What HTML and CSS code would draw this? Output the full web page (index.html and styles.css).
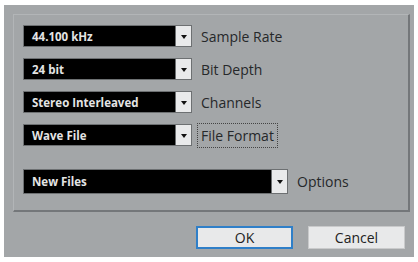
FILE: index.html
```html
<!DOCTYPE html>
<html>
<head>
    <link rel="stylesheet" href="styles.css">
</head>
<body>
    <div class="dialog">
        <div class="panel">
            <div class="row">
                <div class="combo">
                    <span class="combo-value">44.100 kHz</span>
                    <span class="combo-arrow"></span>
                </div>
                <span class="label">Sample Rate</span>
            </div>
            <div class="row">
                <div class="combo">
                    <span class="combo-value">24 bit</span>
                    <span class="combo-arrow"></span>
                </div>
                <span class="label">Bit Depth</span>
            </div>
            <div class="row">
                <div class="combo">
                    <span class="combo-value">Stereo Interleaved</span>
                    <span class="combo-arrow"></span>
                </div>
                <span class="label">Channels</span>
            </div>
            <div class="row">
                <div class="combo">
                    <span class="combo-value">Wave File</span>
                    <span class="combo-arrow"></span>
                </div>
                <span class="label focused">File Format</span>
            </div>
            <div class="row options-row">
                <div class="combo wide">
                    <span class="combo-value">New Files</span>
                    <span class="combo-arrow"></span>
                </div>
                <span class="label">Options</span>
            </div>
        </div>
        <div class="buttons">
            <button class="btn btn-default">OK</button>
            <button class="btn">Cancel</button>
        </div>
    </div>
</body>
</html>
```

FILE: styles.css
```css
body {
    margin: 0;
    background-color: #fff;
    font-family: "Open Sans", "Noto Sans", sans-serif;
}
.dialog {
    margin: 5px 4px 0 4px;
    width: 410px;
    height: 252px;
    box-sizing: border-box;
    background-color: #a3a6a8;
    padding: 9px 9px 0 9px;
}
.panel {
    width: 397px;
    height: 198px;
    box-sizing: border-box;
    border-top: 1px solid #b2b5b7;
    border-left: 1px solid #b2b5b7;
    border-right: 2px solid #74777a;
    border-bottom: 2px solid #74777a;
    margin-right: -4px;
    padding: 10px 0 0 9px;
    display: flex;
    flex-direction: column;
    gap: 11px;
}
.row {
    display: flex;
    align-items: center;
    gap: 9px;
    height: 22px;
}
.options-row {
    margin-top: 12px;
    height: 25px;
}
.combo {
    width: 169px;
    height: 100%;
    display: flex;
    background-color: #000;
    border: 1px solid #6d7072;
    box-sizing: border-box;
}
.combo.wide {
    width: 265px;
}
.combo-value {
    flex: 1;
    display: flex;
    align-items: center;
    padding-left: 8px;
    font-size: 11.5px;
    font-weight: bold;
    color: #e4e4e4;
}
.combo-arrow {
    width: 15px;
    background-color: #e9eaeb;
    border-left: 1px solid #6d7072;
    display: flex;
    align-items: center;
    justify-content: center;
}
.combo-arrow::after {
    content: "";
    border-left: 3px solid transparent;
    border-right: 3px solid transparent;
    border-top: 4px solid #111;
    margin-top: 1px;
}
.label {
    font-size: 14px;
    color: #26282a;
}
.focused {
    outline: 1px dotted #444;
    outline-offset: 0;
    padding: 2px 3px 2px 3px;
    margin-left: -3px;
}
.buttons {
    display: flex;
    justify-content: flex-end;
    gap: 15px;
    margin-top: 14px;
}
.btn {
    width: 97px;
    height: 23px;
    box-sizing: border-box;
    font-family: "Open Sans", "Noto Sans", sans-serif;
    font-size: 14px;
    color: #222;
    background-color: #e8e9ea;
    border: 1px solid #c9cacb;
    padding: 0;
}
.btn-default {
    border: 2px solid #2f7fc8;
}
```
